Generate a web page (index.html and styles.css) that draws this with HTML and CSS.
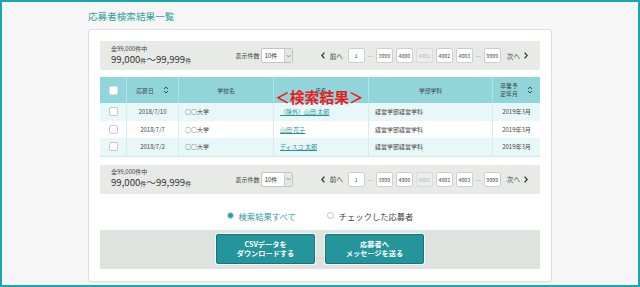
FILE: index.html
```html
<!DOCTYPE html>
<html lang="ja">
<head>
<meta charset="utf-8">
<title>応募者検索結果一覧</title>
<link rel="stylesheet" href="styles.css">
</head>
<body>
<div class="frame">
  <h1 class="title">応募者検索結果一覧</h1>
  <section class="card">
    <div class="bar">
      <div class="count">
        <div class="count-total">全99,000件中</div>
        <div class="count-range">99,000<small>件</small>～99,999<small>件</small></div>
      </div>
      <div class="perpage">
        <span class="perpage-label">表示件数</span>
        <span class="select"><span class="select-val">10件</span><span class="select-arrow"><svg width="5" height="4" viewBox="0 0 5 4"><polyline points="0.5,1 2.5,3 4.5,1" fill="none" stroke="#777" stroke-width="0.8"/></svg></span></span>
      </div>
      <nav class="pager">
        <span class="pg-prev"><svg class="chev" width="4" height="7" viewBox="0 0 4 7"><polyline points="3.4,0.6 0.8,3.5 3.4,6.4" fill="none" stroke="#333" stroke-width="1.3"/></svg>前へ</span>
        <span class="pg-box">1</span>
        <span class="pg-dots">…</span>
        <span class="pg-box">3999</span>
        <span class="pg-box">4000</span>
        <span class="pg-box is-current">4001</span>
        <span class="pg-box">4002</span>
        <span class="pg-box">4003</span>
        <span class="pg-dots">…</span>
        <span class="pg-box">9999</span>
        <span class="pg-next">次へ<svg class="chev" width="4" height="7" viewBox="0 0 4 7"><polyline points="0.6,0.6 3.2,3.5 0.6,6.4" fill="none" stroke="#333" stroke-width="1.3"/></svg></span>
      </nav>
    </div>

    <div class="table">
      <div class="row head">
        <div class="cell c-check"><span class="checkbox head-box"></span></div>
        <div class="cell c-center">応募日<svg class="sort" width="6" height="8" viewBox="0 0 6 8"><polyline points="1,3 3,1 5,3" fill="none" stroke="#333" stroke-width="0.9"/><polyline points="1,5 3,7 5,5" fill="none" stroke="#333" stroke-width="0.9"/></svg></div>
        <div class="cell c-center">学校名</div>
        <div class="cell c-center">氏名</div>
        <div class="cell c-center">学部学科</div>
        <div class="cell c-center c-grad"><span class="two-line">卒業予<br>定年月</span><svg class="sort" width="6" height="8" viewBox="0 0 6 8"><polyline points="1,3 3,1 5,3" fill="none" stroke="#333" stroke-width="0.9"/><polyline points="1,5 3,7 5,5" fill="none" stroke="#333" stroke-width="0.9"/></svg></div>
      </div>
      <div class="row alt">
        <div class="cell c-check"><span class="checkbox"></span></div>
        <div class="cell c-center">2018/7/10</div>
        <div class="cell c-left">○○大学</div>
        <div class="cell c-left"><a class="name">（除外）山田 太郎</a></div>
        <div class="cell c-left">経営学部経営学科</div>
        <div class="cell c-center">2019年3月</div>
      </div>
      <div class="row">
        <div class="cell c-check"><span class="checkbox"></span></div>
        <div class="cell c-center">2018/7/7</div>
        <div class="cell c-left">○○大学</div>
        <div class="cell c-left"><a class="name">山田 花子</a></div>
        <div class="cell c-left">経営学部経営学科</div>
        <div class="cell c-center">2019年3月</div>
      </div>
      <div class="row alt">
        <div class="cell c-check"><span class="checkbox"></span></div>
        <div class="cell c-center">2018/7/2</div>
        <div class="cell c-left">○○大学</div>
        <div class="cell c-left"><a class="name">ディスコ 太郎</a></div>
        <div class="cell c-left">経営学部経営学科</div>
        <div class="cell c-center">2019年3月</div>
      </div>
      <div class="overlay-label">＜検索結果＞</div>
    </div>

    <div class="bar bar-bottom">
      <div class="count">
        <div class="count-total">全99,000件中</div>
        <div class="count-range">99,000<small>件</small>～99,999<small>件</small></div>
      </div>
      <div class="perpage">
        <span class="perpage-label">表示件数</span>
        <span class="select"><span class="select-val">10件</span><span class="select-arrow"><svg width="5" height="4" viewBox="0 0 5 4"><polyline points="0.5,1 2.5,3 4.5,1" fill="none" stroke="#777" stroke-width="0.8"/></svg></span></span>
      </div>
      <nav class="pager">
        <span class="pg-prev"><svg class="chev" width="4" height="7" viewBox="0 0 4 7"><polyline points="3.4,0.6 0.8,3.5 3.4,6.4" fill="none" stroke="#333" stroke-width="1.3"/></svg>前へ</span>
        <span class="pg-box">1</span>
        <span class="pg-dots">…</span>
        <span class="pg-box">3999</span>
        <span class="pg-box">4000</span>
        <span class="pg-box is-current">4001</span>
        <span class="pg-box">4002</span>
        <span class="pg-box">4003</span>
        <span class="pg-dots">…</span>
        <span class="pg-box">9999</span>
        <span class="pg-next">次へ<svg class="chev" width="4" height="7" viewBox="0 0 4 7"><polyline points="0.6,0.6 3.2,3.5 0.6,6.4" fill="none" stroke="#333" stroke-width="1.3"/></svg></span>
      </nav>
    </div>

    <div class="choice">
      <label class="opt opt-on"><span class="radio radio-on"></span>検索結果すべて</label>
      <label class="opt"><span class="radio"></span>チェックした応募者</label>
    </div>

    <div class="actions">
      <button class="btn">CSVデータを<br>ダウンロードする</button>
      <button class="btn">応募者へ<br>メッセージを送る</button>
    </div>
  </section>
</div>
</body>
</html>
```

FILE: styles.css
```css
* { box-sizing: border-box; margin: 0; padding: 0; }

html, body {
  width: 640px;
  height: 287px;
  overflow: hidden;
}

body {
  font-family: "Noto Sans CJK JP", "Noto Sans", sans-serif;
  color: #444;
  background: #f6f6f6;
}

.frame {
  width: 640px;
  height: 287px;
  border: 2px solid #1ba6ac;
  background: #f6f6f6;
  padding: 9px 86px 0 86px;
}

.title {
  font-size: 9.6px;
  line-height: 10px;
  font-weight: normal;
  color: #2f9ea4;
  white-space: nowrap;
}

.card {
  margin-top: 8px;
  width: 464px;
  height: 253px;
  background: #fff;
  border: 1px solid #dedede;
  border-radius: 3px;
  padding: 11px 11px 0 11px;
}

/* summary / pager bar */
.bar {
  height: 29px;
  background: #e8eae7;
  display: flex;
  align-items: center;
  padding: 0 12px 0 11px;
}

.bar-bottom { margin-top: 8px; }

.count { flex: 1; }

.count-total {
  font-size: 6px;
  line-height: 8px;
  color: #444;
}

.count-range {
  font-size: 9.6px;
  line-height: 12px;
  color: #333;
  white-space: nowrap;
}

.count-range small {
  font-size: 6px;
}

.perpage {
  display: flex;
  align-items: center;
  gap: 1px;
  margin-right: 28px;
}

.perpage-label {
  font-size: 6px;
  color: #444;
}

.select {
  display: flex;
  width: 32px;
  height: 15px;
  background: #fff;
  border: 1px solid #c4c4c4;
  border-radius: 2px;
  overflow: hidden;
}

.select-val {
  flex: 1;
  font-size: 6px;
  line-height: 13px;
  padding-left: 3px;
  color: #333;
}

.select-arrow {
  width: 8px;
  background: #e6e6e6;
  border-left: 1px solid #cfcfcf;
  display: flex;
  align-items: center;
  justify-content: center;
}

.pager {
  display: flex;
  align-items: center;
  gap: 3px;
}

.pg-prev, .pg-next {
  display: flex;
  align-items: center;
  gap: 5px;
  font-size: 6.6px;
  color: #444;
}

.pg-prev { margin-right: 2px; }
.pg-next { margin-left: 3px; gap: 4px; }

.chev { display: block; }

.pg-box {
  width: 17px;
  height: 15px;
  background: #fff;
  border: 1px solid #cfcfcf;
  border-radius: 2px;
  font-size: 5.2px;
  line-height: 13px;
  text-align: center;
  color: #444;
}

.pg-box.is-current {
  background: #ececec;
  color: #b8b8b8;
  border-color: #dadada;
}

.pg-dots {
  width: 5px;
  font-size: 5px;
  color: #888;
  text-align: center;
}

/* table */
.table {
  position: relative;
  margin-top: 7px;
  border-bottom: 1px solid #cdebed;
}

.row {
  display: grid;
  grid-template-columns: 27px 52px 95px 95px 124px 47px;
  height: 17.5px;
  background: #fff;
}

.row.alt { background: #e8f7f8; }

.row.head {
  height: 26px;
  background: #91d4d9;
}

.cell {
  display: flex;
  align-items: center;
  font-size: 6px;
  color: #444;
  border-right: 1px solid #d3eef0;
  white-space: nowrap;
  overflow: hidden;
}

.cell:last-child { border-right: none; }

.row.head .cell {
  border-right-color: #b3e2e5;
  font-size: 5.8px;
  color: #3f4a4b;
}

.c-check { justify-content: center; }
.c-center { justify-content: center; }
.c-left { padding-left: 6px; }

.sort { margin-left: 9px; display: block; }

.two-line { line-height: 8px; text-align: left; }

.checkbox {
  width: 9px;
  height: 9px;
  background: #fff;
  border: 1px solid #c9c9c9;
  border-radius: 2px;
}

.head-box { border-color: #e3e3e3; }

.name {
  color: #1f939a;
  text-decoration: underline;
}

.overlay-label {
  position: absolute;
  left: 175px;
  top: 11px;
  font-size: 14.8px;
  line-height: 18px;
  font-weight: bold;
  color: #ea1b1b;
  white-space: nowrap;
}

/* radio choice */
.choice {
  display: flex;
  justify-content: center;
  gap: 31px;
  margin-top: 16px;
  height: 12px;
  align-items: center;
}

.opt {
  display: flex;
  align-items: center;
  gap: 5px;
  font-size: 8.3px;
  color: #444;
}

.opt-on { color: #2b9ca2; }

.radio {
  width: 7px;
  height: 7px;
  border-radius: 50%;
  background: #fff;
  border: 1px solid #c2c2c2;
}

.radio-on {
  background: #2b9ca2;
  border-color: #bfe3e5;
}

/* actions */
.actions {
  margin-top: 8px;
  height: 39px;
  background: #dfe3df;
  display: flex;
  justify-content: center;
  align-items: center;
  gap: 10px;
}

.btn {
  width: 99px;
  height: 30px;
  background: #23959b;
  border: 1px solid #17767b;
  border-radius: 2px;
  box-shadow: 0 0 0 1px rgba(255, 255, 255, 0.7);
  color: #fff;
  font-family: "Noto Sans CJK JP", "Noto Sans", sans-serif;
  font-size: 7.2px;
  font-weight: bold;
  line-height: 9px;
  text-align: center;
}
```
